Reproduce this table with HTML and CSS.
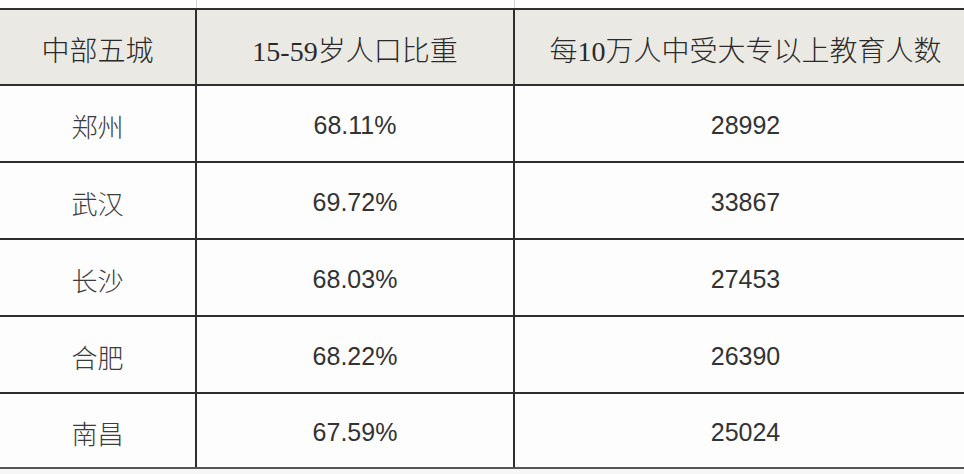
FILE: index.html
```html
<!DOCTYPE html>
<html lang="zh-CN">
<head>
<meta charset="utf-8">
<title>中部五城</title>
<link rel="stylesheet" href="styles.css">
</head>
<body>
<div class="strip">
  <div class="strip-cell"></div>
  <div class="strip-cell"></div>
  <div class="strip-cell last"></div>
</div>
<div class="table">
  <div class="row head">
    <div class="cell">中部五城</div>
    <div class="cell">15-59岁人口比重</div>
    <div class="cell last">每10万人中受大专以上教育人数</div>
  </div>
  <div class="row">
    <div class="cell city">郑州</div>
    <div class="cell num">68.11%</div>
    <div class="cell num last">28992</div>
  </div>
  <div class="row">
    <div class="cell city">武汉</div>
    <div class="cell num">69.72%</div>
    <div class="cell num last">33867</div>
  </div>
  <div class="row">
    <div class="cell city">长沙</div>
    <div class="cell num">68.03%</div>
    <div class="cell num last">27453</div>
  </div>
  <div class="row">
    <div class="cell city">合肥</div>
    <div class="cell num">68.22%</div>
    <div class="cell num last">26390</div>
  </div>
  <div class="row final">
    <div class="cell city">南昌</div>
    <div class="cell num">67.59%</div>
    <div class="cell num last">25024</div>
  </div>
</div>
</body>
</html>
```

FILE: styles.css
```css
html, body {
  margin: 0;
  padding: 0;
  overflow: hidden;
}
body {
  width: 964px;
  height: 474px;
  background: #f6f6f7;
  font-family: "Liberation Sans", "Noto Sans CJK SC", sans-serif;
  color: #333;
}
.strip {
  display: grid;
  grid-template-columns: 197px 318px 461px;
  height: 8px;
  width: 976px;
  background: #fdfdfd;
}
.strip-cell {
  border-right: 1px solid #d6d6d6;
  box-sizing: border-box;
}
.strip-cell.last {
  border-right: none;
}
.table {
  width: 976px;
  border-top: 2px solid #2e2e2e;
  background: #fdfdfe;
}
.row {
  display: grid;
  grid-template-columns: 197px 318px 461px;
  height: 77px;
  box-sizing: border-box;
  border-bottom: 2px solid #2e2e2e;
}
.row.head {
  height: 76px;
  background: #ebe9e3;
}
.row.final {
  height: 75px;
  border-bottom-color: #555;
}
.cell {
  box-sizing: border-box;
  border-right: 2px solid #2e2e2e;
  display: flex;
  align-items: center;
  justify-content: center;
  white-space: nowrap;
}
.cell.last {
  border-right: none;
}
.head .cell {
  font-family: "Liberation Serif", "Noto Sans CJK SC", serif;
  font-size: 28px;
  font-weight: 300;
  color: #2a2a2a;
  padding-top: 4px;
}
.city {
  font-family: "Noto Sans CJK SC", sans-serif;
  font-size: 26px;
  font-weight: 300;
  color: #3c3c3c;
  padding-top: 4px;
}
.num {
  font-size: 25px;
  color: #333;
  padding-top: 4px;
}
```
